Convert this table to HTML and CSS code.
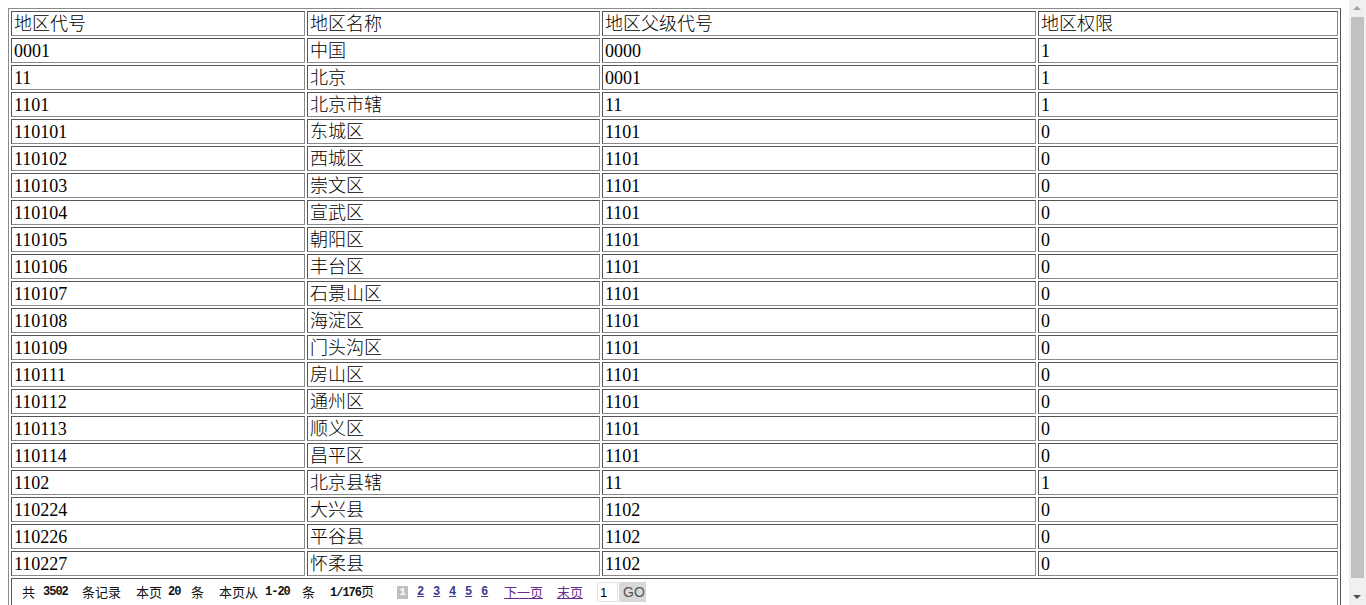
FILE: index.html
```html
<!DOCTYPE html>
<html lang="zh-CN">
<head>
<meta charset="utf-8">
<title>地区列表</title>
<link rel="stylesheet" href="styles.css">
</head>
<body>
<table class="grid">
  <colgroup>
    <col class="c1"><col class="c2"><col class="c3"><col class="c4">
  </colgroup>
  <tr><td>地区代号</td><td>地区名称</td><td>地区父级代号</td><td>地区权限</td></tr>
  <tr><td>0001</td><td>中国</td><td>0000</td><td>1</td></tr>
  <tr><td>11</td><td>北京</td><td>0001</td><td>1</td></tr>
  <tr><td>1101</td><td>北京市辖</td><td>11</td><td>1</td></tr>
  <tr><td>110101</td><td>东城区</td><td>1101</td><td>0</td></tr>
  <tr><td>110102</td><td>西城区</td><td>1101</td><td>0</td></tr>
  <tr><td>110103</td><td>崇文区</td><td>1101</td><td>0</td></tr>
  <tr><td>110104</td><td>宣武区</td><td>1101</td><td>0</td></tr>
  <tr><td>110105</td><td>朝阳区</td><td>1101</td><td>0</td></tr>
  <tr><td>110106</td><td>丰台区</td><td>1101</td><td>0</td></tr>
  <tr><td>110107</td><td>石景山区</td><td>1101</td><td>0</td></tr>
  <tr><td>110108</td><td>海淀区</td><td>1101</td><td>0</td></tr>
  <tr><td>110109</td><td>门头沟区</td><td>1101</td><td>0</td></tr>
  <tr><td>110111</td><td>房山区</td><td>1101</td><td>0</td></tr>
  <tr><td>110112</td><td>通州区</td><td>1101</td><td>0</td></tr>
  <tr><td>110113</td><td>顺义区</td><td>1101</td><td>0</td></tr>
  <tr><td>110114</td><td>昌平区</td><td>1101</td><td>0</td></tr>
  <tr><td>1102</td><td>北京县辖</td><td>11</td><td>1</td></tr>
  <tr><td>110224</td><td>大兴县</td><td>1102</td><td>0</td></tr>
  <tr><td>110226</td><td>平谷县</td><td>1102</td><td>0</td></tr>
  <tr><td>110227</td><td>怀柔县</td><td>1102</td><td>0</td></tr>
  <tr>
    <td colspan="4" class="pager">
      <div class="pager-row">
        <span class="t w12">共</span>
        <b class="n w24 g9">3502</b>
        <span class="t w36 g15">条记录</span>
        <span class="t w24 g18">本页</span>
        <b class="n w12 g8">20</b>
        <span class="t w12 g11">条</span>
        <span class="t w36 g16">本页从</span>
        <b class="n w27 g10">1-20</b>
        <span class="t w12 g10">条</span>
        <span class="t w51 g16"><b class="n">1/176</b>页</span>
        <span class="cur g16">1</span>
        <a href="#" class="num g9">2</a>
        <a href="#" class="num g9">3</a>
        <a href="#" class="num g9">4</a>
        <a href="#" class="num g9">5</a>
        <a href="#" class="num g9">6</a>
        <a href="#" class="nav w36 g16">下一页</a>
        <a href="#" class="nav w24 g17">末页</a>
        <input class="jump-input g16" type="text" value="1">
        <button class="go" type="button">GO</button>
      </div>
    </td>
  </tr>
</table>
<div class="scrollbar" aria-hidden="true">
  <div class="sb-arrow sb-up"></div>
  <div class="sb-track"><div class="sb-thumb"></div></div>
  <div class="sb-arrow sb-down"></div>
</div>
</body>
</html>
```

FILE: styles.css
```css
html, body {
  background: #ffffff;
}
body {
  margin: 8px 25px 8px 8px;
  font-family: "Liberation Serif", "Noto Sans CJK SC", serif;
  font-size: 18px;
  color: #000;
}
.grid {
  width: 100%;
  table-layout: fixed;
  border-collapse: separate;
  border-spacing: 2px;
  border: 1px solid #8a8a8a;
  border-right-color: #555;
  border-bottom-color: #555;
}
.c1 { width: 294px; }
.c2 { width: 293px; }
.c3 { width: 434px; }
.grid td {
  box-sizing: border-box;
  border: 1px solid #555;
  border-right-color: #8a8a8a;
  border-bottom-color: #8a8a8a;
  padding: 2px 1px 0 2px;
  height: 25px;
  line-height: 21px;
  text-align: left;
  vertical-align: middle;
  white-space: nowrap;
  font-weight: 300;
}
.grid td.pager {
  height: 28px;
  padding: 0 0 0 10px;
  font-family: "Noto Sans CJK SC", "Liberation Sans", sans-serif;
  font-size: 13px;
  font-weight: normal;
  line-height: 16px;
  color: #111;
}
.pager-row {
  display: flex;
  align-items: center;
  height: 26px;
}
.pager-row > * {
  flex: none;
}
.t {
  display: inline-block;
  white-space: nowrap;
}
.n {
  display: inline-block;
  font-family: "Liberation Mono", monospace;
  font-weight: bold;
  font-size: 12px;
  letter-spacing: -1px;
  white-space: nowrap;
}
.w12 { width: 12px; }
.w24 { width: 24px; }
.w27 { width: 27px; }
.w36 { width: 36px; }
.w51 { width: 51px; }
.g8 { margin-left: 8px; }
.g9 { margin-left: 9px; }
.g10 { margin-left: 10px; }
.g11 { margin-left: 11px; }
.g15 { margin-left: 15px; }
.g16 { margin-left: 16px; }
.g17 { margin-left: 17px; }
.g18 { margin-left: 18px; }
.cur {
  display: inline-block;
  width: 11px;
  height: 13px;
  background: #bfbfbf;
  color: #ffffff;
  font-family: "Liberation Mono", monospace;
  font-weight: bold;
  font-size: 11px;
  line-height: 13px;
  text-align: center;
}
.num {
  display: inline-block;
  width: 7px;
  font-family: "Liberation Mono", monospace;
  font-weight: bold;
  font-size: 12px;
  color: #3b3b8f;
  text-decoration: underline;
}
.nav {
  display: inline-block;
  color: #6a2b8a;
  text-decoration: underline;
  white-space: nowrap;
}
.jump-input {
  box-sizing: border-box;
  width: 21px;
  height: 20px;
  margin-top: 0;
  margin-bottom: 0;
  margin-right: 1px;
  padding: 0 2px;
  border: 1px solid #e4e4e4;
  font-family: "Liberation Sans", sans-serif;
  font-size: 13px;
  color: #000;
}
.go {
  box-sizing: border-box;
  width: 27px;
  height: 20px;
  margin: 0;
  padding: 0 0 0 4px;
  border: none;
  background: #d9d9d9;
  color: #555;
  font-family: "Liberation Sans", sans-serif;
  font-size: 14px;
  text-align: left;
  overflow: hidden;
  white-space: nowrap;
}
.scrollbar {
  position: fixed;
  top: 0;
  right: 0;
  width: 17px;
  height: 100vh;
  background: #f0f0f0;
  display: flex;
  flex-direction: column;
}
.sb-arrow {
  flex: none;
  height: 17px;
  position: relative;
}
.sb-arrow::after {
  content: "";
  position: absolute;
  left: 4px;
  width: 0;
  height: 0;
  border-left: 4px solid transparent;
  border-right: 4px solid transparent;
}
.sb-up::after {
  top: 6px;
  border-bottom: 4px solid #a3a3a3;
}
.sb-down::after {
  top: 7px;
  border-top: 4px solid #505050;
}
.sb-track {
  flex: 1;
  padding: 0 2px 10px 2px;
  display: flex;
}
.sb-thumb {
  flex: 1;
  background: #c1c1c1;
}
```
